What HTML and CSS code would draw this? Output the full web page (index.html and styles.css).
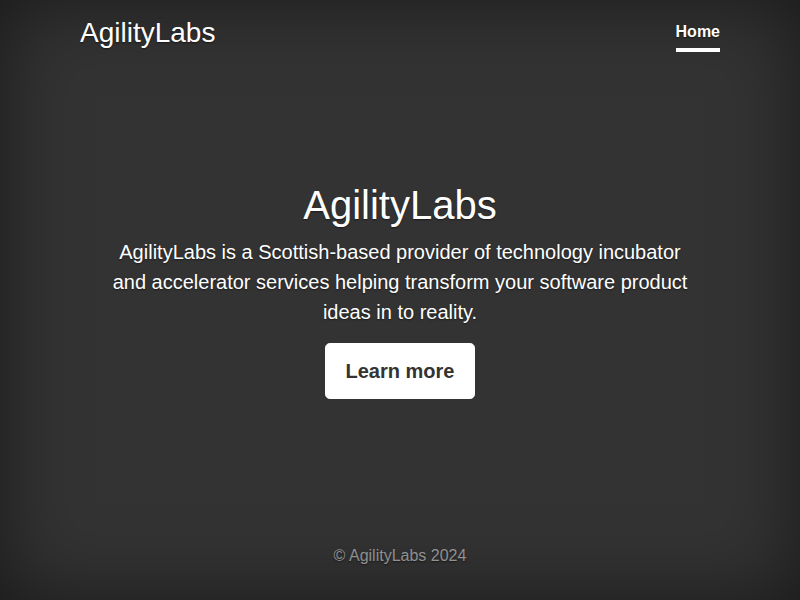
FILE: index.html
```html
<!DOCTYPE html>
<html lang="en">
<head>
  <meta charset="UTF-8" />
  <meta name="viewport" content="width=device-width, initial-scale=1.0" />
  <title>AgilityLabs</title>
  <link rel="stylesheet" href="styles.css">
</head>
<body>
  <div class="cover-container">
    <header class="masthead">
      <h3 class="masthead-brand">AgilityLabs</h3>
      <nav class="nav-masthead">
        <a class="nav-link active" href="#">Home</a>
      </nav>
    </header>

    <main class="cover">
      <h1 class="cover-heading">AgilityLabs</h1>
      <p class="lead">AgilityLabs is a Scottish-based provider of technology incubator and accelerator services helping transform your software product ideas in to reality.</p>
      <p class="lead">
        <a href="#" class="btn">Learn more</a>
      </p>
    </main>

    <footer class="mastfoot">
      <p>&copy; AgilityLabs 2024</p>
    </footer>
  </div>
</body>
</html>
```

FILE: styles.css
```css
html, body {
  height: 100%;
}
body {
  margin: 0;
  display: flex;
  font-family: "Liberation Sans", Arial, sans-serif;
  font-size: 16px;
  line-height: 1.5;
  color: #fff;
  text-align: center;
  background-color: #333;
  text-shadow: 0 .05rem .1rem rgba(0,0,0,.5);
  box-shadow: inset 0 0 5rem rgba(0,0,0,.5);
}
a {
  text-decoration: none;
}
.cover-container {
  display: flex;
  flex-direction: column;
  width: 100%;
  max-width: 42em;
  height: 100%;
  padding: 1rem;
  margin: 0 auto;
  box-sizing: border-box;
}
.masthead {
  display: flex;
  justify-content: space-between;
  align-items: flex-start;
  margin-bottom: auto;
}
.masthead-brand {
  margin: 0;
  font-size: 1.75rem;
  font-weight: 400;
  line-height: 1.2;
}
.nav-masthead {
  display: flex;
}
.nav-masthead .nav-link {
  display: block;
  padding: .25rem 0;
  font-weight: 700;
  color: rgba(255,255,255,.5);
  border-bottom: .25rem solid transparent;
}
.nav-masthead .active {
  color: #fff;
  border-bottom-color: #fff;
}
.cover {
  padding: 0 1.5rem;
}
.cover-heading {
  margin: 0 0 .5rem;
  font-size: 2.5rem;
  font-weight: 500;
  line-height: 1.2;
}
.lead {
  margin: 0 0 1rem;
  font-size: 1.25rem;
  font-weight: 300;
}
.btn {
  display: inline-block;
  padding: .75rem 1.25rem;
  font-size: 1.25rem;
  font-weight: 700;
  line-height: 1.5;
  color: #333;
  text-shadow: none;
  background-color: #fff;
  border: .05rem solid #fff;
  border-radius: .3rem;
}
.mastfoot {
  margin-top: auto;
  color: rgba(255,255,255,.5);
}
.mastfoot p {
  margin: 0 0 1rem;
}
```
